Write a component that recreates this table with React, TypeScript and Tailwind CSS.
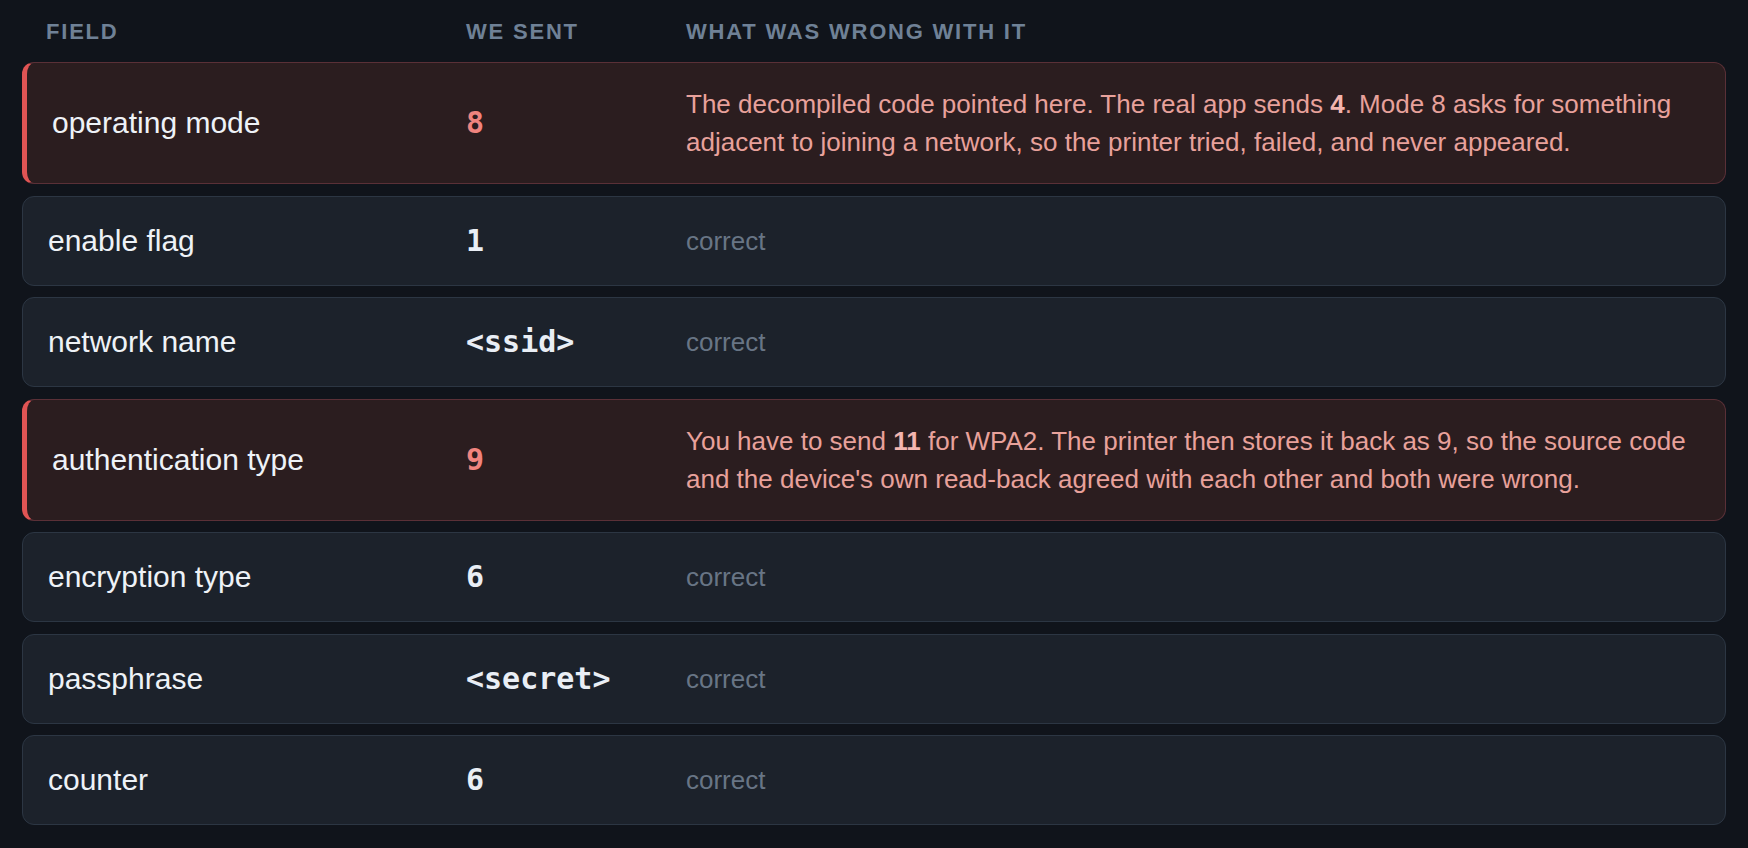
import { Fragment } from 'react';

type Row = {
  field: string;
  sent: string;
  wrong: boolean;
  note?: React.ReactNode;
};

const rows: Row[] = [
  {
    field: 'operating mode',
    sent: '8',
    wrong: true,
    note: (
      <>
        The decompiled code pointed here. The real app sends <b className="font-bold text-[#f3b5af]">4</b>. Mode 8 asks for
        something adjacent to joining a network, so the printer tried, failed, and never appeared.
      </>
    ),
  },
  { field: 'enable flag', sent: '1', wrong: false },
  { field: 'network name', sent: '<ssid>', wrong: false },
  {
    field: 'authentication type',
    sent: '9',
    wrong: true,
    note: (
      <>
        You have to send <b className="font-bold text-[#f3b5af]">11</b> for WPA2. The printer then stores it back as 9, so
        the source code and the device's own read-back agreed with each other and both were wrong.
      </>
    ),
  },
  { field: 'encryption type', sent: '6', wrong: false },
  { field: 'passphrase', sent: '<secret>', wrong: false },
  { field: 'counter', sent: '6', wrong: false },
];

const sans = "font-['Liberation_Sans',Arial,sans-serif]";
const mono = "font-['DejaVu_Sans_Mono','Liberation_Mono',monospace]";

export default function App() {
  return (
    <div className={`min-h-screen bg-[#10141b] px-[22px] pt-[21px] pb-6 ${sans}`}>
      {/* column headings */}
      <div className="grid grid-cols-[420px_220px_1fr] pl-[24px] text-[22px] leading-[22px] font-bold uppercase tracking-[1.8px] text-[#6f8196]">
        <span>Field</span>
        <span>We sent</span>
        <span>What was wrong with it</span>
      </div>

      <div className="mt-[19px] flex flex-col gap-[11.5px]">
        {rows.map((r) => (
          <Fragment key={r.field}>
            <div
              className={
                r.wrong
                  ? 'grid grid-cols-[419px_220px_1fr] items-center rounded-xl border border-[#5a3037] border-l-[5px] border-l-[#e05454] bg-[#2b1d1f] py-[22px] pl-[20px] pr-[24px]'
                  : 'grid grid-cols-[419px_220px_1fr] items-center rounded-xl border border-[#2c3643] bg-[#1c222b] py-[22px] pl-[24px] pr-[24px]'
              }
            >
              <span className={`text-[30px] leading-[44px] text-[#eef2f7] ${r.wrong ? 'pl-[5px]' : 'pl-[1px]'}`}>{r.field}</span>
              <span
                className={`${mono} text-[30px] leading-[38px] font-bold ${r.wrong ? 'text-[#f0847e]' : 'text-[#e9eef5]'}`}
              >
                {r.sent}
              </span>
              {r.wrong ? (
                <p className="text-[26px] leading-[38px] text-[#e8a19b]">{r.note}</p>
              ) : (
                <span className="text-[26px] leading-[38px] text-[#687585]">correct</span>
              )}
            </div>
          </Fragment>
        ))}
      </div>
    </div>
  );
}
